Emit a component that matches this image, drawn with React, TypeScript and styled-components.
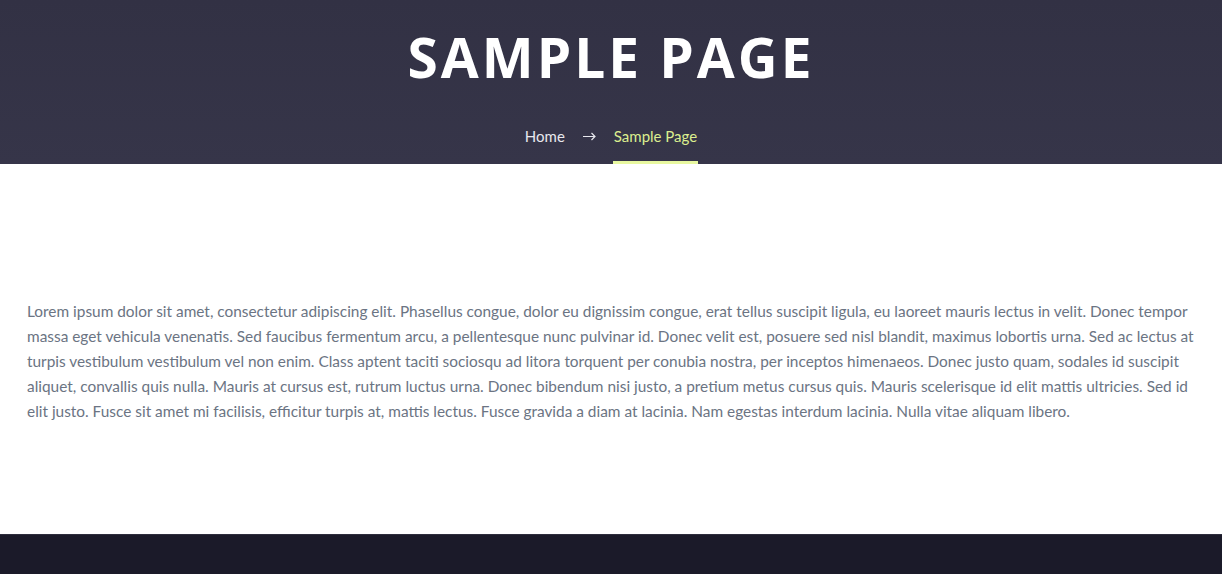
import styled, { createGlobalStyle } from 'styled-components';

const GlobalStyle = createGlobalStyle`
  html, body {
    margin: 0;
    padding: 0;
    background: #ffffff;
  }
  * {
    box-sizing: border-box;
  }
`;

const Page = styled.div`
  display: flex;
  flex-direction: column;
  min-height: 574px;
`;

const Hero = styled.header`
  background: linear-gradient(180deg, #323144 0%, #363549 100%);
  display: flex;
  flex-direction: column;
  align-items: center;
  height: 164px;
  padding-top: 25px;
`;

const Title = styled.h1`
  margin: 0;
  font-family: 'Open Sans', 'Liberation Sans', sans-serif;
  font-weight: 700;
  font-size: 55px;
  line-height: 64px;
  letter-spacing: 3px;
  color: #ffffff;
  text-transform: uppercase;
`;

const Crumbs = styled.nav`
  display: flex;
  align-items: stretch;
  gap: 17px;
  margin-top: auto;
  font-family: 'Lato', 'Open Sans', sans-serif;
  font-size: 15px;
`;

const Crumb = styled.a<{ $active?: boolean }>`
  display: flex;
  align-items: center;
  height: 48px;
  padding-bottom: 5px;
  padding-inline: 1px;
  color: ${p => (p.$active ? '#dcee8f' : '#e8e8ee')};
  text-decoration: none;
  border-bottom: 3px solid ${p => (p.$active ? '#e8f8a0' : 'transparent')};
`;

const Arrow = styled.span`
  display: flex;
  align-items: center;
  height: 48px;
  padding-bottom: 8px;
  color: #e8e8ee;
`;

const Main = styled.main`
  height: 370px;
  padding: 135px 27px 0;
`;

const Text = styled.p`
  margin: 0;
  font-family: 'Lato', 'Open Sans', sans-serif;
  font-size: 15.4px;
  line-height: 25px;
  color: #6b7483;
`;

const Footer = styled.footer`
  flex: 1;
  min-height: 40px;
  background: #1b1a29;
  border-top: 1px solid #2e2d3d;
`;

const ArrowIcon = () => (
  <svg width="13" height="9" viewBox="0 0 13 9" fill="none">
    <path d="M0 4.5h12M8.5 1l3.5 3.5L8.5 8" stroke="#e8e8ee" strokeWidth="1.2" />
  </svg>
);

export default function App() {
  return (
    <>
      <GlobalStyle />
      <Page>
        <Hero>
          <Title>Sample Page</Title>
          <Crumbs>
            <Crumb href="#">Home</Crumb>
            <Arrow>
              <ArrowIcon />
            </Arrow>
            <Crumb href="#" $active>
              Sample Page
            </Crumb>
          </Crumbs>
        </Hero>
        <Main>
          <Text>
            Lorem ipsum dolor sit amet, consectetur adipiscing elit. Phasellus congue, dolor eu dignissim congue, erat
            tellus suscipit ligula, eu laoreet mauris lectus in velit. Donec tempor massa eget vehicula venenatis. Sed
            faucibus fermentum arcu, a pellentesque nunc pulvinar id. Donec velit est, posuere sed nisl blandit, maximus
            lobortis urna. Sed ac lectus at turpis vestibulum vestibulum vel non enim. Class aptent taciti sociosqu ad
            litora torquent per conubia nostra, per inceptos himenaeos. Donec justo quam, sodales id suscipit aliquet,
            convallis quis nulla. Mauris at cursus est, rutrum luctus urna. Donec bibendum nisi justo, a pretium metus
            cursus quis. Mauris scelerisque id elit mattis ultricies. Sed id elit justo. Fusce sit amet mi facilisis,
            efficitur turpis at, mattis lectus. Fusce gravida a diam at lacinia. Nam egestas interdum lacinia. Nulla
            vitae aliquam libero.
          </Text>
        </Main>
        <Footer />
      </Page>
    </>
  );
}
